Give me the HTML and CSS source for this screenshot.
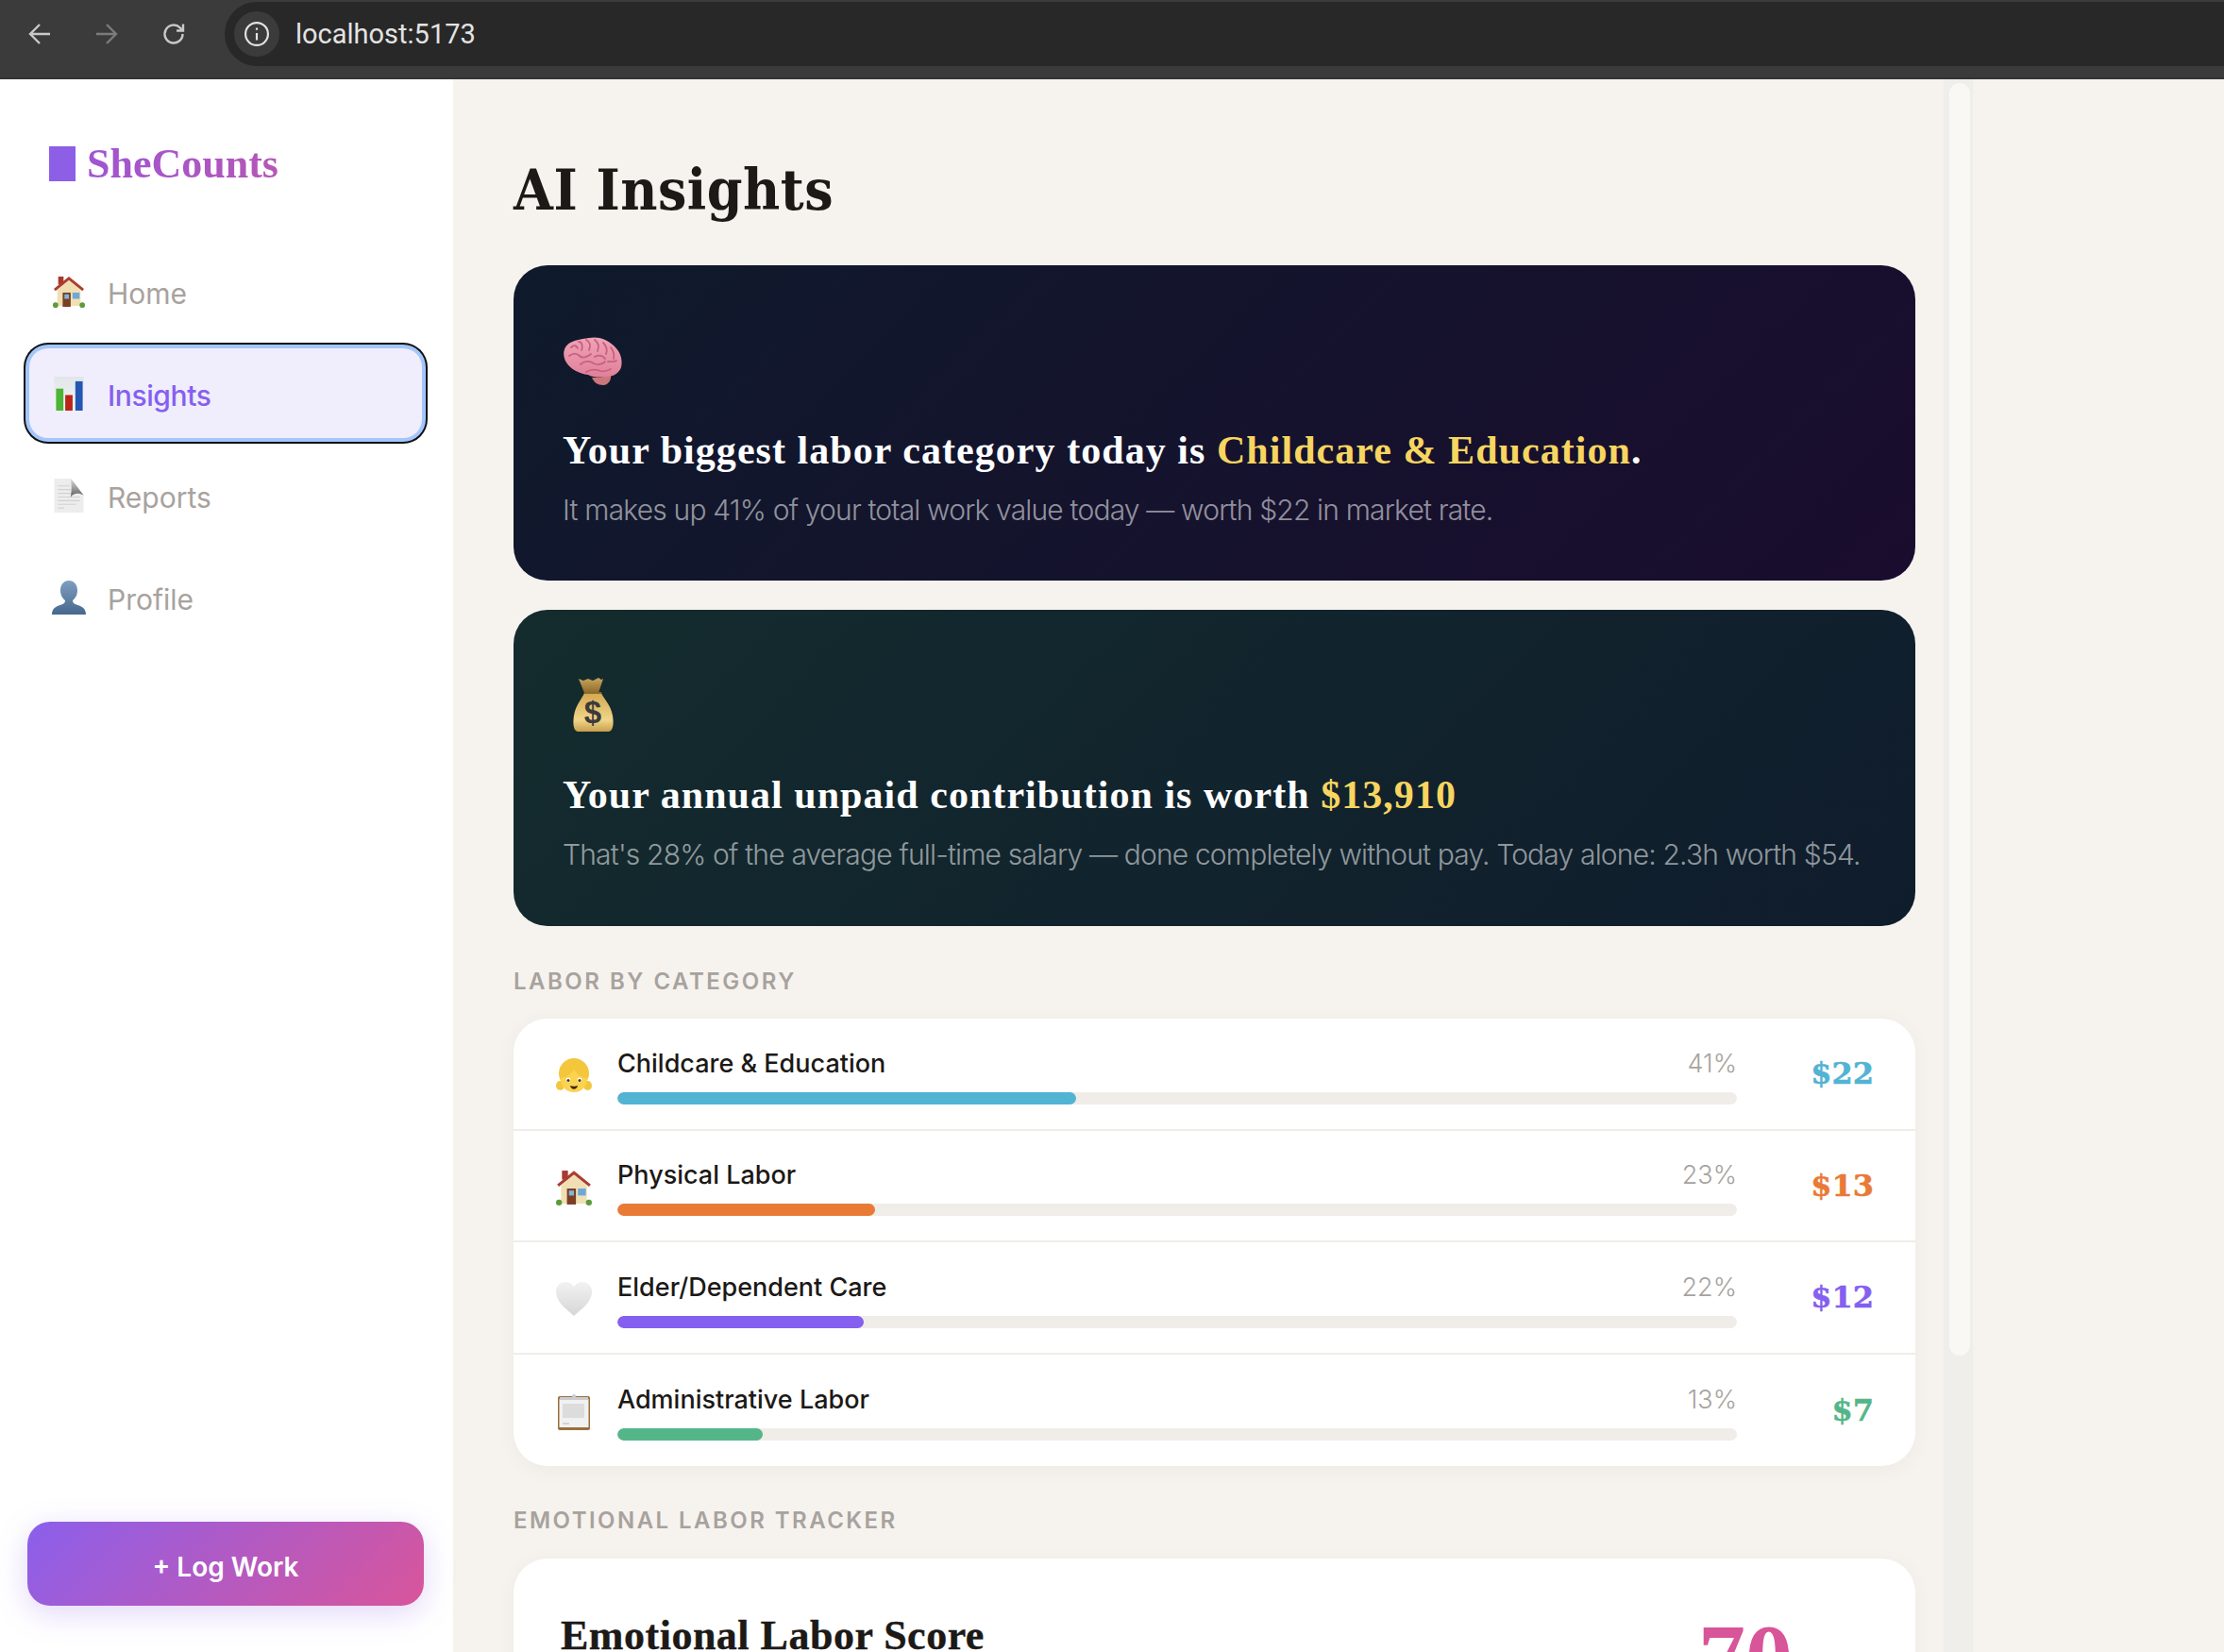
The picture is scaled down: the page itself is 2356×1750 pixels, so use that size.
FILE: index.html
```html
<!DOCTYPE html>
<html lang="en">
<head>
<meta charset="UTF-8" />
<meta name="viewport" content="width=device-width, initial-scale=1" />
<title>SheCounts - AI Insights</title>
<link rel="stylesheet" href="styles.css">
</head>
<body>

<!-- Browser toolbar -->
<header class="toolbar">
  <div class="tb-nav">
    <svg class="tb-icon" viewBox="0 0 24 24"><path d="M23 12H2M12 2L2 12l10 10" /></svg>
    <svg class="tb-icon tb-off" viewBox="0 0 24 24"><path d="M1 12h21M12 2l10 10-10 10" /></svg>
    <svg class="tb-icon" viewBox="0 0 24 24"><path d="M21.500 12a9.500 9.500 0 1 1-2.800-6.700L22 8.500M22 1.500v7h-7" /></svg>
  </div>
  <div class="address">
    <span class="site-info">
      <svg viewBox="0 0 24 24"><circle cx="12" cy="12" r="11" /><path d="M12 11v7M12 6v2" /></svg>
    </span>
    <span class="url">localhost:5173</span>
  </div>
</header>

<div class="app">
  <aside class="sidebar">
    <div class="logo"><span class="logo-mark"></span><span class="logo-text">SheCounts</span></div>

    <nav class="nav-links">
      <a href="#" class="nav-item">
        <svg class="nav-icon" viewBox="0 0 36 36"><use href="#house" /></svg>
        <span>Home</span>
      </a>
      <a href="#" class="nav-item active">
        <svg class="nav-icon" viewBox="0 0 32 37">
          <rect width="32" height="37" fill="url(#chart-bg)" />
          <rect x="2" y="13" width="8" height="24" fill="#4cb535" />
          <rect x="12" y="20" width="8" height="17" fill="#bb2418" />
          <rect x="23" y="5" width="8" height="32" fill="#2456b4" />
        </svg>
        <span>Insights</span>
      </a>
      <a href="#" class="nav-item">
        <svg class="nav-icon" viewBox="0 0 32 37">
          <path d="M0 0h18l14 18v19H0z" fill="#ededed" />
          <path d="M4 8h13M4 12h14M4 16h16M4 20h24M4 24h24M4 28h20M4 32h7" stroke="#d2d2d2" stroke-width="1.200" />
          <path d="M18 0c4 4 9 12 14 18-6-3-11-2-14 2 1-7 1-14 0-20z" fill="url(#doc-fold)" />
        </svg>
        <span>Reports</span>
      </a>
      <a href="#" class="nav-item">
        <svg class="nav-icon nav-icon-wide" viewBox="2 0 32 36">
          <path d="M18 0c5.500 0 9 4.500 9 10.500 0 5-2.500 8.500-5 10.500 0 2 1 3.500 4 4.500 6 2 10 4 10 10.500H0c0-6.500 4-8.500 10-10.500 3-1 4-2.500 4-4.500-2.500-2-5-5.500-5-10.500C9 4.500 12.500 0 18 0z" fill="url(#bust)" />
        </svg>
        <span>Profile</span>
      </a>
    </nav>

    <button class="log-btn"><span>+ Log Work</span></button>
  </aside>

  <main class="content">
    <h1>AI Insights</h1>

    <section class="insight insight-purple">
      <svg class="insight-icon" viewBox="0 0 62 60">
        <path d="M30 47c3 0 14 0 20-3 1 6-3 11-8 11-6 0-10-3-12-8z" fill="#c9777c" />
        <path d="M27 5c9-2 19 1 26 8 7 6 10 15 8 23-2 6-8 10-15 10-7 1-15 1-20-2C17 43 7 38 3 31-2 23 0 14 7 10c6-3 13-4 20-5z" fill="url(#brain)" />
        <path d="M8 15c3-3 6-2 7 1M16 9c3 0 5 4 3 9M24 7c4 2 5 6 3 11M33 7c4 3 5 7 3 12M42 10c3 3 5 8 3 12M50 15c3 4 4 8 3 12M6 24c4-3 8-3 11 0 3 3 8 1 12-2M33 25c4-2 8-2 11 2M18 33c4-4 10-4 14-1 4 2 9 1 12-2M47 30c3 0 6 1 9-1M24 41c5-3 10-3 15-1 4 1 7 0 11-2" fill="none" stroke="#c9607f" stroke-width="1.800" stroke-linecap="round" />
      </svg>
      <h2>Your biggest labor category today is <span class="hl">Childcare &amp; Education</span>.</h2>
      <p>It makes up 41% of your total work value today — worth $22 in market rate.</p>
    </section>

    <section class="insight insight-green">
      <svg class="insight-icon" viewBox="0 0 62 60">
        <path d="M16 1l5 2 5-2 5 2 6-3 3 2 2-1-5 15H22z" fill="url(#bag-top)" />
        <path d="M22 16h18c2 6 10 12 12 24 1 7 1 13-2 16-1 1-3 1-4 1H17c-2 0-3 0-4-1-3-3-3-9-2-16 2-12 9-18 11-24z" fill="url(#bag)" />
        <path d="M22 16h18" stroke="#8d6a2a" stroke-width="2" />
        <text x="31" y="48" class="bag-sign">$</text>
      </svg>
      <h2>Your annual unpaid contribution is worth <span class="hl">$13,910</span></h2>
      <p>That's 28% of the average full-time salary — done completely without pay. Today alone: 2.3h worth $54.</p>
    </section>

    <div class="section-label">Labor by Category</div>
    <section class="card category-list">
      <div class="category-row">
        <svg class="row-icon" viewBox="0 0 38 38">
          <ellipse cx="4.500" cy="30" rx="4.500" ry="5" fill="#f4c63c" />
          <ellipse cx="33.500" cy="30" rx="4.500" ry="5" fill="#f4c63c" />
          <circle cx="19" cy="17" r="16" fill="#f4c63c" />
          <path d="M5 22c5 0 10-3 14-9 4 6 9 9 14 9 0 9-6 15-14 15S5 31 5 22z" fill="#fbd34f" />
          <circle cx="13" cy="24" r="2.400" fill="#fff" />
          <circle cx="25" cy="24" r="2.400" fill="#fff" />
          <circle cx="13" cy="24.500" r="1.500" fill="#4a3410" />
          <circle cx="25" cy="24.500" r="1.500" fill="#4a3410" />
          <path d="M15 30c2 1 6 1 8 0-1 5-7 5-8 0z" fill="#3d2408" />
        </svg>
        <div class="row-main">
          <div class="row-top"><span class="row-name">Childcare &amp; Education</span><span class="row-pct">41%</span></div>
          <div class="track"><div class="fill fill-blue" style="width:41%"></div></div>
        </div>
        <div class="row-amount amt-blue">$22</div>
      </div>
      <div class="category-row">
        <svg class="row-icon" viewBox="0 0 36 36"><use href="#house" /></svg>
        <div class="row-main">
          <div class="row-top"><span class="row-name">Physical Labor</span><span class="row-pct">23%</span></div>
          <div class="track"><div class="fill fill-orange" style="width:23%"></div></div>
        </div>
        <div class="row-amount amt-orange">$13</div>
      </div>
      <div class="category-row">
        <svg class="row-icon" viewBox="0 0 38 38">
          <path d="M19 37C10 29 0 22 0 11 0 5 5 1 10.500 1 14 1 17 3 19 6c2-3 5-5 8.500-5C33 1 38 5 38 11c0 11-10 18-19 26z" fill="url(#heart)" />
        </svg>
        <div class="row-main">
          <div class="row-top"><span class="row-name">Elder/Dependent Care</span><span class="row-pct">22%</span></div>
          <div class="track"><div class="fill fill-purple" style="width:22%"></div></div>
        </div>
        <div class="row-amount amt-purple">$12</div>
      </div>
      <div class="category-row">
        <svg class="row-icon" viewBox="0 0 38 38">
          <rect x="2" y="2" width="34" height="36" rx="2" fill="#9a6f3c" />
          <rect x="3.500" y="5" width="31" height="30" fill="#f1f1f1" />
          <rect x="7" y="10" width="23" height="15" fill="#dcdcdc" />
          <path d="M7 31h7" stroke="#c8c8c8" stroke-width="1.500" />
          <path d="M4 3h30v3H4z" fill="#c9ccd0" />
          <circle cx="19" cy="2" r="2" fill="#c9ccd0" />
        </svg>
        <div class="row-main">
          <div class="row-top"><span class="row-name">Administrative Labor</span><span class="row-pct">13%</span></div>
          <div class="track"><div class="fill fill-green" style="width:13%"></div></div>
        </div>
        <div class="row-amount amt-green">$7</div>
      </div>
    </section>

    <div class="section-label section-label-2">Emotional Labor Tracker</div>
    <section class="card score-card">
      <h3>Emotional Labor Score</h3>
      <div class="score-value">70</div>
    </section>
  </main>

  <div class="scroll-track"><div class="scroll-thumb"></div></div>
</div>

<!-- shared drawings and gradients -->
<svg class="defs" width="0" height="0">
  <defs>
    <linearGradient id="bust" x1="0" y1="0" x2="0" y2="1">
      <stop offset="0" stop-color="#7f9fc0" />
      <stop offset="1" stop-color="#46688c" />
    </linearGradient>
    <linearGradient id="chart-bg" x1="0" y1="0" x2="0" y2="1">
      <stop offset="0" stop-color="#e2e6e8" />
      <stop offset="1" stop-color="#f4f5f6" />
    </linearGradient>
    <linearGradient id="doc-fold" x1="0" y1="0" x2="0" y2="1">
      <stop offset="0" stop-color="#dcdcdc" />
      <stop offset="1" stop-color="#5f5f5f" />
    </linearGradient>
    <linearGradient id="brain" x1="0" y1="0" x2="0" y2="1">
      <stop offset="0" stop-color="#f0a3b6" />
      <stop offset="1" stop-color="#e0809a" />
    </linearGradient>
    <linearGradient id="bag" x1="0" y1="0" x2="0" y2="1">
      <stop offset="0" stop-color="#d2a850" />
      <stop offset="0.700" stop-color="#f0d58a" />
      <stop offset="1" stop-color="#c79f4c" />
    </linearGradient>
    <linearGradient id="bag-top" x1="0" y1="0" x2="0" y2="1">
      <stop offset="0" stop-color="#c9a55c" />
      <stop offset="1" stop-color="#8d6a2a" />
    </linearGradient>
    <linearGradient id="heart" x1="0" y1="0" x2="0" y2="1">
      <stop offset="0" stop-color="#f2f2f2" />
      <stop offset="1" stop-color="#d6d6d6" />
    </linearGradient>
  </defs>
  <symbol id="house" viewBox="0 0 36 36">
    <rect x="6" y="1" width="6" height="9" fill="#a8392e" />
    <path d="M5 16L18 5l13 11v18H5z" fill="#f1dfb4" />
    <path d="M2 16L18 3l16 13" fill="none" stroke="#ac3d30" stroke-width="3" />
    <rect x="11" y="19" width="9" height="16" fill="#7a3f24" />
    <rect x="13" y="21" width="5" height="5" fill="#7fb7dc" />
    <rect x="22" y="19" width="8" height="7" fill="#6fa8d8" />
    <circle cx="3" cy="33" r="3" fill="#5d9b3a" />
    <circle cx="33" cy="33" r="3" fill="#5d9b3a" />
  </symbol>
</svg>

</body>
</html>
```

FILE: styles.css
```css
* {
  box-sizing: border-box;
}
html,
body {
  margin: 0;
  padding: 0;
  height: 1750px;
  overflow: hidden;
}
body {
  font-family: "Inter", "Liberation Sans", sans-serif;
  background: #f6f3ee;
  color: #1c1917;
}
.defs {
  position: absolute;
}

/* toolbar */
.toolbar {
  height: 84px;
  background: #3b3b3b;
  border-bottom: 2px solid #343434;
  display: flex;
  align-items: center;
  padding: 2px 0 12px 30px;
  gap: 42px;
}
.tb-nav {
  display: flex;
  gap: 47px;
}
.tb-icon {
  width: 24px;
  height: 24px;
  flex: none;
  fill: none;
  stroke: #c9c9c9;
  stroke-width: 2.400;
}
.tb-off {
  stroke: #7b7b7b;
}
.address {
  flex: 1;
  height: 68px;
  background: #282828;
  border-radius: 34px 0 0 34px;
  display: flex;
  align-items: center;
  padding-left: 10px;
  gap: 17px;
}
.site-info {
  width: 48px;
  height: 48px;
  border-radius: 50%;
  background: #3b3b3b;
  display: flex;
  align-items: center;
  justify-content: center;
}
.site-info svg {
  width: 26px;
  height: 26px;
  fill: none;
  stroke: #e3e3e3;
  stroke-width: 2;
}
.url {
  font-family: "Roboto", sans-serif;
  font-size: 29px;
  color: #e3e3e3;
}

/* layout */
.app {
  display: flex;
  height: 1666px;
  width: 2090px;
}
.sidebar {
  width: 480px;
  flex: none;
  background: #fff;
  display: flex;
  flex-direction: column;
  padding: 71px 31px 49px 29px;
}
.logo {
  display: flex;
  align-items: center;
  gap: 12px;
  margin-left: 23px;
  height: 37px;
}
.logo-mark {
  width: 28px;
  height: 37px;
  background: #8c5fe6;
}
.logo-text {
  font-family: "Liberation Serif", serif;
  font-weight: 700;
  font-size: 44px;
  background: linear-gradient(90deg, #a055d2, #b556b8);
  -webkit-background-clip: text;
  background-clip: text;
  color: transparent;
}
.nav-links {
  display: flex;
  flex-direction: column;
  gap: 13px;
  margin: 69px 2px 0;
}
.nav-item {
  height: 95px;
  display: flex;
  align-items: center;
  gap: 24px;
  padding-left: 25px;
  font-size: 30px;
  color: #a8a29e;
  text-decoration: none;
  border-radius: 20px;
}
.nav-item span {
  margin-top: 4px;
}
.nav-item.active {
  background: #f0eefc;
  color: #8560f0;
  font-weight: 500;
  letter-spacing: -0.4px;
  box-shadow: 0 0 0 4px #a3c6fb, 0 0 0 6px #111;
}
.nav-icon {
  width: 34px;
  height: 36px;
  flex: none;
}
.nav-icon-wide {
  overflow: visible;
}
.log-btn {
  margin-top: auto;
  height: 89px;
  border: none;
  border-radius: 24px;
  background: linear-gradient(135deg, #8b5fec, #d9559a);
  color: #fff;
  font-family: inherit;
  font-size: 28px;
  font-weight: 600;
  box-shadow: 0 8px 32px rgba(139, 95, 236, 0.25);
}
.log-btn span {
  position: relative;
  top: 3px;
}

/* main column */
.content {
  flex: 1;
  min-width: 0;
  padding: 0 30px 0 64px;
}
h1 {
  font-family: "DejaVu Serif", serif;
  font-stretch: condensed;
  font-weight: 700;
  font-size: 60px;
  line-height: 74px;
  letter-spacing: 0.500px;
  margin: 80px 0 43px;
  color: #1c1917;
}
.insight {
  border-radius: 36px;
  padding: 0 52px;
  color: #fff;
  height: 334px;
  margin-bottom: 31px;
  overflow: hidden;
}
.insight-purple {
  background: linear-gradient(135deg, #0f1a2c, #1a0c2e);
}
.insight-green {
  background: linear-gradient(135deg, #142c2e, #0f1c2c);
  height: 335px;
  margin-bottom: 0;
}
.insight-icon {
  display: block;
  width: 62px;
  height: 60px;
  margin: 72px 0 0 1px;
}
.bag-sign {
  font-family: "Liberation Sans", sans-serif;
  font-weight: 700;
  font-size: 33px;
  text-anchor: middle;
  fill: #3c3a3a;
}
.insight h2 {
  font-family: "Liberation Serif", serif;
  font-weight: 700;
  font-size: 42px;
  line-height: 50px;
  letter-spacing: 1.050px;
  margin: 39px 0 0;
}
.hl {
  color: #f7d560;
}
.insight p {
  font-size: 30px;
  font-weight: 300;
  line-height: 40px;
  letter-spacing: -0.820px;
  margin: 18px 0 0;
  color: rgba(255, 255, 255, 0.55);
  white-space: nowrap;
}
.section-label {
  font-size: 24px;
  font-weight: 600;
  letter-spacing: 2.500px;
  line-height: 30px;
  text-transform: uppercase;
  color: #a8a29e;
  margin: 44px 0 24px;
}
.card {
  background: #fff;
  border-radius: 36px;
  box-shadow: 0 4px 24px rgba(0, 0, 0, 0.04);
}
.category-row {
  display: flex;
  align-items: center;
  height: 118.500px;
  padding: 0 44px 0 45px;
  border-bottom: 2px solid #f0ede8;
}
.category-row:last-child {
  border-bottom: none;
}
.row-icon {
  width: 38px;
  height: 38px;
  flex: none;
  margin: 4px 27px 0 0;
}
.row-main {
  flex: 1;
  min-width: 0;
  padding-top: 4px;
}
.row-top {
  display: flex;
  justify-content: space-between;
  align-items: baseline;
  margin-bottom: 12px;
}
.row-name {
  font-size: 27px;
  font-weight: 500;
  line-height: 36px;
}
.row-pct {
  font-size: 27px;
  font-weight: 300;
  color: #a8a29e;
  line-height: 36px;
}
.track {
  height: 13px;
  background: #f0ede8;
  border-radius: 7px;
  overflow: hidden;
}
.fill {
  height: 100%;
  border-radius: 7px;
}
.fill-blue { background: #52b3d3; }
.fill-orange { background: #e97a35; }
.fill-purple { background: #855ff0; }
.fill-green { background: #54b688; }
.row-amount {
  width: 145px;
  flex: none;
  text-align: right;
  font-family: "DejaVu Serif", serif;
  font-weight: 700;
  font-size: 32px;
  -webkit-text-stroke: 0.5px currentColor;
}
.amt-blue { color: #52b3d3; }
.amt-orange { color: #e97a35; }
.amt-purple { color: #855ff0; }
.amt-green { color: #54b688; }
.section-label-2 {
  margin-top: 43px;
  margin-bottom: 25px;
  letter-spacing: 2.450px;
}
.score-card {
  height: 300px;
  display: flex;
  justify-content: space-between;
  padding: 57px 130px 0 50px;
}
.score-card h3 {
  font-family: "Liberation Serif", serif;
  font-weight: 700;
  font-size: 44px;
  line-height: 50px;
  letter-spacing: 0.500px;
  margin: 0;
  -webkit-text-stroke: 0.4px currentColor;
}
.score-value {
  font-family: "Liberation Serif", serif;
  font-weight: 700;
  font-size: 100px;
  line-height: 96px;
  color: #d9559a;
}

/* scrollbar drawn by the page */
.scroll-track {
  width: 31px;
  flex: none;
  background: #efeeea;
  padding: 4px 3px 0 6px;
}
.scroll-thumb {
  height: 1348px;
  background: #f9f8f4;
  border-radius: 11px;
}
```
